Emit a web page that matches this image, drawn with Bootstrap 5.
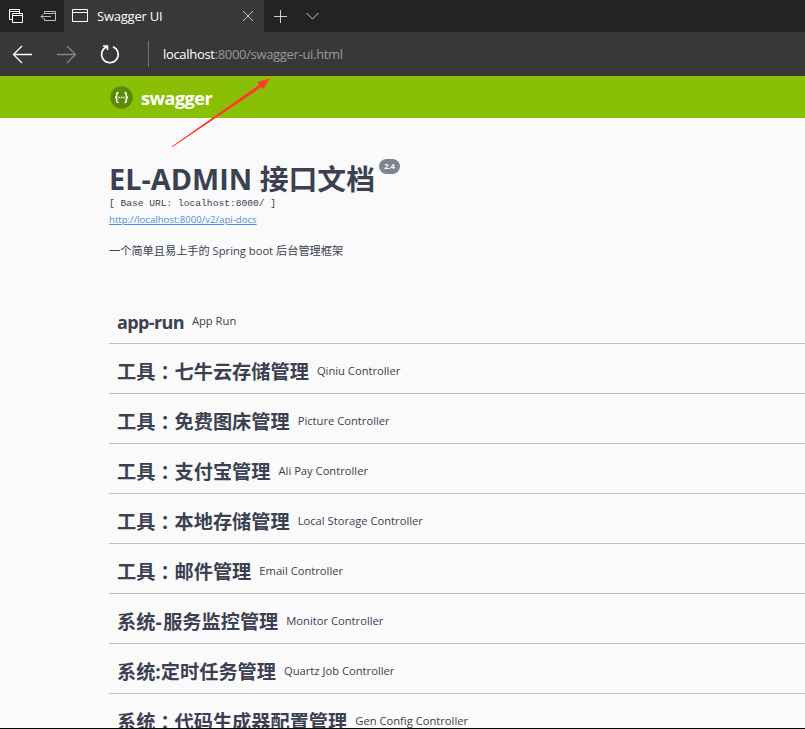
<!DOCTYPE html>
<html lang="zh-CN">
<head>
<meta charset="utf-8">
<title>Swagger UI</title>
<link href="https://cdn.jsdelivr.net/npm/bootstrap@5.3.0/dist/css/bootstrap.min.css" rel="stylesheet">
<style>
body{height:729px;background:#fafafa;color:#3b4151;font-family:"Open Sans","Noto Sans CJK SC",sans-serif}
.screen{height:729px;border-bottom:1px solid #050505}
.tabs-strip{height:32px;background:#232323}
.tools{width:64px;padding-left:8px}
.browser-tab{width:200px;background:#383838;padding:0 9px 0 7px}
.tab-title{font-size:13px;line-height:32px;margin-left:7px;letter-spacing:-.22px}
.address{height:44px;background:#383838;padding-left:12px}
.divider{width:1px;height:26px;background:#777}
.url{font-size:13px;color:#999;letter-spacing:-.32px;margin-left:14px;padding-top:1px}
.chrome-ui{font-family:"Open Sans",sans-serif}
.topbar{height:42px;background:#89bf04;padding-left:110px}
.brand{font-size:18px;font-weight:700;margin-left:8px;line-height:24px;letter-spacing:-.45px;padding-top:1px}
.content-area{margin-left:109px}
.info{height:176px;padding-top:41px}
.doc-title{font-size:28.8px;line-height:39px;font-weight:700;margin:0;letter-spacing:.03px}
.version{width:21px;height:15px;border-radius:8px;background:#7d8492;font-size:7.5px;line-height:15px;font-weight:700;margin:0 0 0 4px}
.base{font:9.6px/12px "Liberation Mono",monospace}
.docs{font-size:9.6px;line-height:13px;color:#4990e2;margin-top:3px}
.desc{font-size:11.2px;line-height:16px;margin-top:17px}
.op{height:50px;border-bottom:1px solid #bfc0c4;padding:5px 0 0 8px}
.op-name{font-size:19.2px;line-height:26px;font-weight:700;margin:1px 0 0;white-space:nowrap}
.op-latin{font-size:18px;letter-spacing:-.62px}
.hyphen{letter-spacing:1.6px}
.colon{font-family:"Noto Sans CJK TC",sans-serif;display:inline-block;line-height:1;transform:translateY(1px)}
.op-note{font-size:11.2px;line-height:16px;margin-left:8px;margin-top:-1px}
.pointer{left:170px;top:76px}
svg{display:block;flex:none}
</style>
<script src="https://cdn.jsdelivr.net/npm/bootstrap@5.3.0/dist/js/bootstrap.bundle.min.js"></script>
</head>
<body class="overflow-hidden">
<div class="screen position-relative overflow-hidden">
<header class="chrome-ui text-white">
 <div class="tabs-strip d-flex align-items-center">
  <div class="tools d-flex align-items-center">
   <svg width="16" height="16" fill="none" stroke="#fff"><path d="M4 11.500H1.500V1.500H11.500V5M1.500 3.500H11.500M4.500 5.500H14.500V14.500H4.500zM4.500 7.500H14.500"/></svg>
   <svg width="18" height="16" class="ms-3" fill="none" stroke="#bbb"><path d="M4.500 6V3.500H15.500V12.500H4.500V10.500M4.500 5.500H15.500M11 8.500H1M3.500 6L1 8.500L3.500 11"/></svg>
  </div>
  <div class="browser-tab d-flex align-items-center h-100">
   <svg width="19" height="16" fill="none" stroke="#fff"><path d="M1.500 1.500H16.500V13.500H1.500zM1.500 4.500H16.500"/></svg>
   <span class="tab-title">Swagger UI</span>
   <svg class="ms-auto" width="14" height="14" stroke="#ccc"><path d="M2 2L12 12M12 2L2 12"/></svg>
  </div>
  <svg width="60" height="32" fill="none" stroke="#ccc"><path d="M10 16.500H23M16.500 10V23M42.500 13L48.500 19L54.500 13"/></svg>
 </div>
 <div class="address d-flex align-items-center">
  <svg width="136" height="44" fill="none" stroke="#fff" stroke-width="1.300"><path d="M20 22.500H1.500M10 14L1.500 22.500L10 31"/><path stroke="#858585" d="M45 22.500H63.500M55 14L63.500 22.500L55 31"/><path stroke-width="1.600" d="M101 14.700A8.300 8.300 0 1 1 94.800 14.700M91 14H95.500V18"/></svg>
  <div class="divider"></div><div class="url"><span class="text-white">localhost</span>:8000/swagger-ui.html</div>
 </div>
</header>
<nav class="topbar d-flex align-items-center">
 <svg width="23" height="23" viewBox="0 0 23 23"><circle cx="11.500" cy="11.500" r="11.200" fill="#5b8a08"/><path d="M8.500 6.500C6.500 6.500 6.800 7.500 6.800 9C6.800 10.500 6.300 11.500 5 11.500C6.300 11.500 6.800 12.500 6.800 14C6.800 15.500 6.500 16.500 8.500 16.500M14.500 6.500C16.500 6.500 16.200 7.500 16.200 9C16.200 10.500 16.700 11.500 18 11.500C16.700 11.500 16.200 12.500 16.200 14C16.200 15.500 16.500 16.500 14.500 16.500" fill="none" stroke="#fff" stroke-width="1.500"/><path d="M8.300 11.500H15" stroke="#fff" stroke-width="1.500" stroke-dasharray="1.500 1"/></svg>
 <span class="brand text-white">swagger</span>
</nav>
<main class="content-area">
 <section class="info">
  <div class="d-flex align-items-start"><h1 class="doc-title text-nowrap">EL-ADMIN 接口文档</h1><span class="version text-white text-center">2.4</span></div>
  <div class="base">[ Base URL: localhost:8000/ ]</div>
  <div class="docs text-decoration-underline">http://localhost:8000/v2/api-docs</div>
  <div class="desc">一个简单且易上手的 Spring boot 后台管理框架</div>
 </section>
 <section>
  <div class="op d-flex align-items-center"><h2 class="op-name op-latin">app-run</h2><span class="op-note">App Run</span></div>
  <div class="op d-flex align-items-center"><h2 class="op-name">工具<span class="colon" lang="zh-TW">：</span>七牛云存储管理</h2><span class="op-note">Qiniu Controller</span></div>
  <div class="op d-flex align-items-center"><h2 class="op-name">工具<span class="colon" lang="zh-TW">：</span>免费图床管理</h2><span class="op-note">Picture Controller</span></div>
  <div class="op d-flex align-items-center"><h2 class="op-name">工具<span class="colon" lang="zh-TW">：</span>支付宝管理</h2><span class="op-note">Ali Pay Controller</span></div>
  <div class="op d-flex align-items-center"><h2 class="op-name">工具<span class="colon" lang="zh-TW">：</span>本地存储管理</h2><span class="op-note">Local Storage Controller</span></div>
  <div class="op d-flex align-items-center"><h2 class="op-name">工具<span class="colon" lang="zh-TW">：</span>邮件管理</h2><span class="op-note">Email Controller</span></div>
  <div class="op d-flex align-items-center"><h2 class="op-name">系统<span class="hyphen">-</span>服务监控管理</h2><span class="op-note">Monitor Controller</span></div>
  <div class="op d-flex align-items-center"><h2 class="op-name">系统:定时任务管理</h2><span class="op-note">Quartz Job Controller</span></div>
  <div class="op d-flex align-items-center"><h2 class="op-name">系统<span class="colon" lang="zh-TW">：</span>代码生成器配置管理</h2><span class="op-note">Gen Config Controller</span></div>
 </section>
</main>
<svg class="pointer position-absolute" width="104" height="74"><path fill="#ff3b30" d="M2 70.300L89.500 8.500L87.500 6L100 2.300L93.500 13L91.800 11L2.500 71z"/></svg>
</div>
</body>
</html>
